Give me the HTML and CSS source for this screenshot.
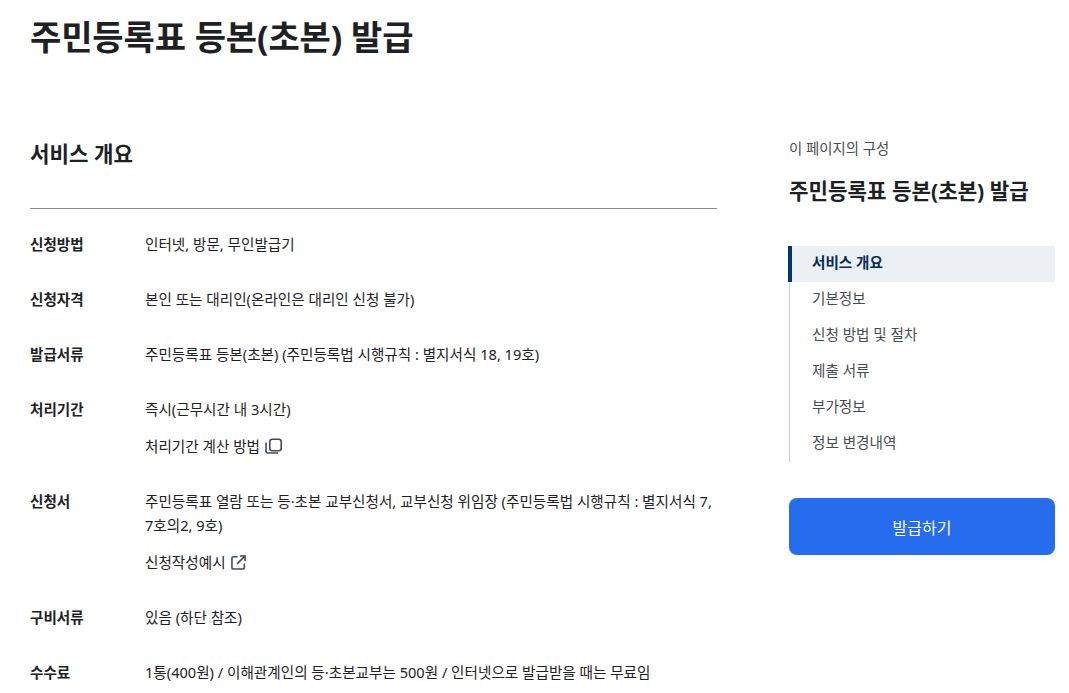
FILE: index.html
```html
<!DOCTYPE html>
<html lang="ko">
    <head>
        <meta charset="utf-8">
        <meta name="viewport" content="width=device-width, initial-scale=1">
        <title>주민등록표 등본(초본) 발급</title>
        <link rel="stylesheet" href="styles.css">
    </head>
    <body>
        <h1 class="page-title">주민등록표 등본(초본) 발급</h1>

        <div class="layout">
            <main class="content">
                <h2 class="section-title">서비스 개요</h2>
                <dl class="info-list">
                    <div class="info-row">
                        <dt>신청방법</dt>
                        <dd><p>인터넷, 방문, 무인발급기</p></dd>
                    </div>
                    <div class="info-row">
                        <dt>신청자격</dt>
                        <dd><p>본인 또는 대리인(온라인은 대리인 신청 불가)</p></dd>
                    </div>
                    <div class="info-row">
                        <dt>발급서류</dt>
                        <dd><p>주민등록표 등본(초본) (주민등록법 시행규칙 : 별지서식 18, 19호)</p></dd>
                    </div>
                    <div class="info-row">
                        <dt>처리기간</dt>
                        <dd>
                            <p>즉시(근무시간 내 3시간)</p>
                            <a class="info-link" href="#">처리기간 계산 방법
                                <svg class="icon" width="17" height="16" viewBox="0 0 17 16" fill="none" stroke="#464c53" stroke-width="1.6">
                                    <rect x="4.8" y="1.3" width="11.4" height="11.4" rx="2.4"/>
                                    <path d="M1 4.5V13A2 2 0 0 0 3 15H13"/>
                                </svg>
                            </a>
                        </dd>
                    </div>
                    <div class="info-row">
                        <dt>신청서</dt>
                        <dd>
                            <p>주민등록표 열람 또는 등·초본 교부신청서, 교부신청 위임장 (주민등록법 시행규칙 : 별지서식 7, 7호의2, 9호)</p>
                            <a class="info-link" href="#">신청작성예시
                                <svg class="icon" width="15" height="15" viewBox="0 0 16 16" fill="none" stroke="#464c53" stroke-width="1.7">
                                    <path d="M7 1.8H2.5A1.5 1.5 0 0 0 1 3.3V13.5A1.5 1.5 0 0 0 2.5 15H12.7A1.5 1.5 0 0 0 14.2 13.5V9"/>
                                    <path d="M6.5 9.5L15 1M9.5 1H15V6.5"/>
                                </svg>
                            </a>
                        </dd>
                    </div>
                    <div class="info-row">
                        <dt>구비서류</dt>
                        <dd><p>있음 (하단 참조)</p></dd>
                    </div>
                    <div class="info-row">
                        <dt>수수료</dt>
                        <dd><p>1통(400원) / 이해관계인의 등·초본교부는 500원 / 인터넷으로 발급받을 때는 무료임</p></dd>
                    </div>
                </dl>
            </main>

            <aside class="side">
                <p class="side-caption">이 페이지의 구성</p>
                <h2 class="side-title">주민등록표 등본(초본) 발급</h2>
                <ul class="side-nav">
                    <li class="active"><a href="#">서비스 개요</a></li>
                    <li><a href="#">기본정보</a></li>
                    <li><a href="#">신청 방법 및 절차</a></li>
                    <li><a href="#">제출 서류</a></li>
                    <li><a href="#">부가정보</a></li>
                    <li><a href="#">정보 변경내역</a></li>
                </ul>
                <button class="apply-btn">발급하기</button>
            </aside>
        </div>
    </body>
</html>
```

FILE: styles.css
```css
/* 전체 */
body {
    font-family: "Noto Sans", "Noto Sans CJK KR", sans-serif;
    margin: 0;
    padding: 0 14px 0 30px;
    height: 693px;
    overflow: hidden;
    background-color: #fff;
    color: #1e2124;
}

.page-title {
    margin: 0;
    padding-top: 10px;
    font-size: 34px;
    line-height: 54px;
    font-weight: 700;
    letter-spacing: -0.1px;
}

.layout {
    display: flex;
    justify-content: space-between;
    margin-top: 73px;
}

/* 본문 */
.content {
    width: 687px;
}

.section-title {
    margin: 0;
    font-size: 21.2px;
    line-height: 33px;
    font-weight: 700;
    padding-bottom: 38px;
    border-bottom: 1px solid #8a8d91;
}

.info-list {
    margin: 0;
    padding-top: 23px;
}

.info-row {
    display: flex;
    margin-bottom: 31px;
    font-size: 14.6px;
    line-height: 24px;
}

.info-row dt {
    width: 115px;
    flex-shrink: 0;
    font-weight: 700;
}

.info-row dd {
    margin: 0;
    flex: 1;
    word-break: keep-all;
}

.info-row p {
    margin: 0;
}

.info-link {
    display: flex;
    align-items: center;
    gap: 5px;
    margin-top: 13px;
    color: #1e2124;
    text-decoration: none;
}

/* 사이드 */
.side {
    width: 266px;
}

.side-caption {
    margin: 0;
    font-size: 14.4px;
    line-height: 23px;
    color: #464c53;
}

.side-title {
    margin: 17px 0 0;
    font-size: 21.2px;
    line-height: 28px;
    font-weight: 700;
}

.side-nav {
    list-style: none;
    margin: 41px 0 0;
    padding: 0;
    border-left: 1px solid #cdd1d5;
}

.side-nav li a {
    display: block;
    height: 36px;
    padding-left: 22px;
    font-size: 14.6px;
    line-height: 33px;
    color: #464c53;
    text-decoration: none;
}

.side-nav li.active {
    margin-left: -2px;
    border-left: 4px solid #003675;
    background: #ecf0f5;
}

.side-nav li.active a {
    padding-left: 20px;
    font-weight: 700;
    color: #052b57;
}

.apply-btn {
    display: block;
    width: 100%;
    height: 57px;
    margin-top: 36px;
    background: #256cee;
    color: #fff;
    border: none;
    border-radius: 8px;
    font-family: inherit;
    font-size: 16px;
    cursor: pointer;
}
```
